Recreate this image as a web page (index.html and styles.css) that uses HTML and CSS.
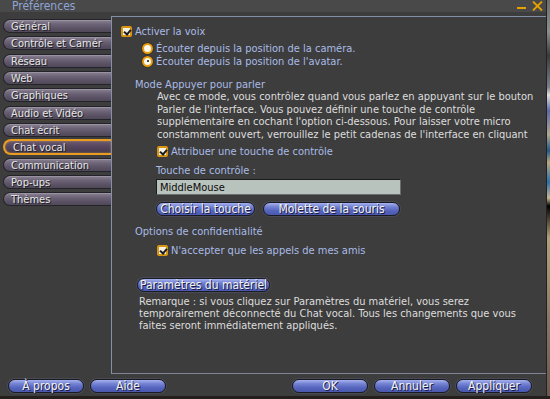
FILE: index.html
```html
<!DOCTYPE html>
<html lang="fr">
<head>
    <meta charset="UTF-8">
    <title>Préférences</title>
    <link rel="stylesheet" href="styles.css">
</head>
<body>
    <div class="screen">
        <div class="window">
            <div class="titlebar">
                <span class="title">Préférences</span>
                <span class="controls">
                    <span class="minimize"></span>
                    <svg class="close" width="11" height="10" viewBox="0 0 11 10">
                        <path d="M1 0.5 L10 9.5 M10 0.5 L1 9.5" stroke="#e8a200" stroke-width="1.8" fill="none"/>
                    </svg>
                </span>
            </div>

            <div class="main">
                <div class="tabs">
                    <div class="tab">Général</div>
                    <div class="tab">Contrôle et Camér</div>
                    <div class="tab">Réseau</div>
                    <div class="tab">Web</div>
                    <div class="tab">Graphiques</div>
                    <div class="tab">Audio et Vidéo</div>
                    <div class="tab">Chat écrit</div>
                    <div class="tab active">Chat vocal</div>
                    <div class="tab">Communication</div>
                    <div class="tab">Pop-ups</div>
                    <div class="tab">Thèmes</div>
                </div>

                <div class="panel">
                    <label class="row row-voice">
                        <span class="checkbox checked"></span>
                        <span class="label">Activer la voix</span>
                    </label>
                    <label class="row row-radio first">
                        <span class="radio"></span>
                        <span class="label">Écouter depuis la position de la caméra.</span>
                    </label>
                    <label class="row row-radio">
                        <span class="radio selected"></span>
                        <span class="label">Écouter depuis la position de l'avatar.</span>
                    </label>

                    <div class="heading heading-ptt">Mode Appuyer pour parler</div>
                    <p class="text text-ptt">
                        Avec ce mode, vous contrôlez quand vous parlez en appuyant sur le bouton<br>
                        Parler de l'interface. Vous pouvez définir une touche de contrôle<br>
                        supplémentaire en cochant l'option ci-dessous. Pour laisser votre micro<br>
                        constamment ouvert, verrouillez le petit cadenas de l'interface en cliquant
                    </p>

                    <label class="row row-sub row-key">
                        <span class="checkbox checked"></span>
                        <span class="label">Attribuer une touche de contrôle</span>
                    </label>
                    <div class="field-label">Touche de contrôle :</div>
                    <div class="input">MiddleMouse</div>
                    <div class="button-row">
                        <button class="button btn-choose">Choisir la touche</button>
                        <button class="button btn-wheel">Molette de la souris</button>
                    </div>

                    <div class="heading heading-privacy">Options de confidentialité</div>
                    <label class="row row-sub row-friends">
                        <span class="checkbox checked"></span>
                        <span class="label">N'accepter que les appels de mes amis</span>
                    </label>

                    <button class="button btn-hardware">Paramètres du matériel</button>
                    <p class="text text-note">
                        Remarque : si vous cliquez sur Paramètres du matériel, vous serez<br>
                        temporairement déconnecté du Chat vocal. Tous les changements que vous<br>
                        faites seront immédiatement appliqués.
                    </p>
                </div>
            </div>

            <div class="footer">
                <div class="footer-left">
                    <button class="button btn-footer">À propos</button>
                    <button class="button btn-footer">Aide</button>
                </div>
                <div class="footer-right">
                    <button class="button btn-footer">OK</button>
                    <button class="button btn-footer">Annuler</button>
                    <button class="button btn-footer">Appliquer</button>
                </div>
            </div>
        </div>
        <div class="scene"></div>
    </div>
</body>
</html>
```

FILE: styles.css
```css
:root {
    --window-bg: #3d3d3d;
    --title-bg: #494949;
    --line: #8390a8;
    --label-blue: #a9bbe6;
    --text: #dedede;
    --orange: #e8a200;
}

* {
    box-sizing: border-box;
    margin: 0;
    padding: 0;
}

body {
    width: 550px;
    height: 399px;
    overflow: hidden;
    background: #231f1c;
    font-family: 'DejaVu Sans Condensed', 'DejaVu Sans', sans-serif;
    font-stretch: condensed;
    font-size: 11px;
    color: var(--text);
}

.screen {
    display: flex;
    height: 396px;
}

.window {
    width: 547px;
    height: 396px;
    display: flex;
    flex-direction: column;
    background-color: var(--window-bg);
    border-right: 1px solid #222222;
}

.scene {
    width: 3px;
    height: 396px;
    background: linear-gradient(#6a6f6a 0, #8a8f8c 8%, #3c3a3a 14%, #77808c 22%, #e0e0e0 24%, #5a6aa8 28%, #b0a890 34%, #1c5a8a 38%, #b8a880 41%, #2a70a8 46%, #c8b890 50%, #000000 52%, #b0a078 60%, #a09070 70%, #887868 80%, #6a5a50 100%);
}

/* title bar */

.titlebar {
    height: 12px;
    display: flex;
    justify-content: space-between;
    align-items: flex-start;
    background-color: var(--title-bg);
}

.title {
    padding-left: 12px;
    font-size: 12px;
    line-height: 12px;
    color: #8ea4d6;
}

.controls {
    display: flex;
    align-items: flex-start;
    padding-top: 1px;
    padding-right: 3px;
}

.minimize {
    width: 9px;
    height: 2px;
    margin-top: 6px;
    margin-right: 6px;
    background-color: var(--orange);
}

/* main area */

.main {
    display: flex;
    margin-top: 4px;
    height: 358px;
}

.tabs {
    width: 111px;
    padding: 3px 0 0 3px;
    display: flex;
    flex-direction: column;
    gap: 3.33px;
}

.tab {
    height: 14px;
    padding-left: 7px;
    font-size: 11px;
    line-height: 13px;
    color: #e6e6e6;
    text-shadow: 1px 1px 0 #1e1c22;
    white-space: nowrap;
    border: 1px solid #25232a;
    border-right: none;
    border-radius: 7px 0 0 7px;
    background: linear-gradient(#8b8394 0, #6d6577 35%, #5b5365 70%, #4f4858 100%);
    box-shadow: inset 0 1px 0 rgba(255, 255, 255, 0.15);
}

.tab.active {
    height: 16px;
    margin: -1px 0;
    padding-left: 8px;
    line-height: 13px;
    border: 2px solid #e89c20;
    border-right: none;
    border-radius: 8px 0 0 8px;
    background: linear-gradient(#6a5870 0, #56465e 45%, #44384c 100%);
    box-shadow: inset 0 0 2px rgba(255, 190, 80, 0.6);
    position: relative;
    z-index: 1;
}

.panel {
    flex: 1;
    border-top: 1px solid var(--line);
    border-left: 1px solid var(--line);
    border-bottom: 1px solid #7e8696;
    padding-left: 9px;
    display: flex;
    flex-direction: column;
    align-items: flex-start;
}

/* form rows */

.row {
    display: flex;
    align-items: center;
    height: 13px;
    color: var(--label-blue);
    white-space: nowrap;
}

.row .label {
    line-height: 13px;
}

.row-voice {
    margin-top: 8px;
}

.row-radio {
    padding-left: 21px;
}

.row-radio.first {
    margin-top: 3.5px;
}

.row-radio .label {
    margin-left: 2px;
}

.row-sub {
    padding-left: 36px;
}

.row-key {
    margin-top: 4px;
}

.row-friends {
    margin-top: 6px;
}

.checkbox {
    width: 11px;
    height: 11px;
    margin-right: 3px;
    border: 2px solid #d9950f;
    border-radius: 2px;
    background: #f4f0e4;
    position: relative;
}

.checkbox.checked::after {
    content: "";
    position: absolute;
    left: 2px;
    top: 0;
    width: 3px;
    height: 5px;
    border-right: 2px solid #1c1c1c;
    border-bottom: 2px solid #1c1c1c;
    transform: rotate(40deg);
}

.radio {
    width: 11px;
    height: 11px;
    border-radius: 50%;
    border: 2px solid #e89c10;
    background: #fbf8ee;
    position: relative;
    box-shadow: 0 0 1px #000;
}

.radio.selected::after {
    content: "";
    position: absolute;
    left: 2.5px;
    top: 2.5px;
    width: 2px;
    height: 2px;
    border-radius: 50%;
    background: #111111;
}

.radio + .label {
    margin-left: 3px;
}

.heading {
    height: 13px;
    line-height: 13px;
    padding-left: 14px;
    color: var(--label-blue);
    white-space: nowrap;
}

.heading-ptt {
    margin-top: 10px;
}

.heading-privacy {
    margin-top: 9px;
}

.text {
    line-height: 12.5px;
    white-space: nowrap;
    color: var(--text);
}

.text-ptt {
    margin-top: 0.5px;
    padding-left: 36px;
}

.text-note {
    margin-top: 4px;
    padding-left: 18px;
    line-height: 12px;
}

.field-label {
    margin-top: 7px;
    padding-left: 35px;
    height: 12px;
    line-height: 12px;
    color: var(--label-blue);
}

.input {
    margin-top: 2px;
    margin-left: 35px;
    width: 245px;
    height: 16px;
    padding-left: 3px;
    line-height: 15px;
    color: #0a0a0a;
    background: #b9c3bd;
    border: 1px solid #1c1c1c;
    border-bottom-color: #6a6e70;
    border-right-color: #6a6e70;
}

/* buttons */

.button-row {
    display: flex;
    gap: 8px;
    margin-top: 7px;
    margin-left: 35px;
}

.button {
    height: 14px;
    font-family: inherit;
    font-stretch: condensed;
    font-size: 12px;
    line-height: 12px;
    color: #f2f2f2;
    text-shadow: 1px 1px 0 #1a1a40;
    border: 1px solid #1a1a24;
    border-radius: 7px;
    background: linear-gradient(#a7b2ee 0, #7584d4 30%, #5564bc 65%, #4a58ae 100%);
    box-shadow: 0 0 0 1px #4a4a52;
    cursor: pointer;
}

.btn-choose {
    width: 99px;
}

.btn-wheel {
    width: 137px;
}

.btn-hardware {
    width: 133px;
    margin-top: 21px;
    margin-left: 16px;
}

.footer {
    height: 22px;
    display: flex;
    justify-content: space-between;
    padding: 5px 14px 0 8px;
}

.footer-left,
.footer-right {
    display: flex;
    gap: 6px;
}

.btn-footer {
    width: 76px;
}
```
